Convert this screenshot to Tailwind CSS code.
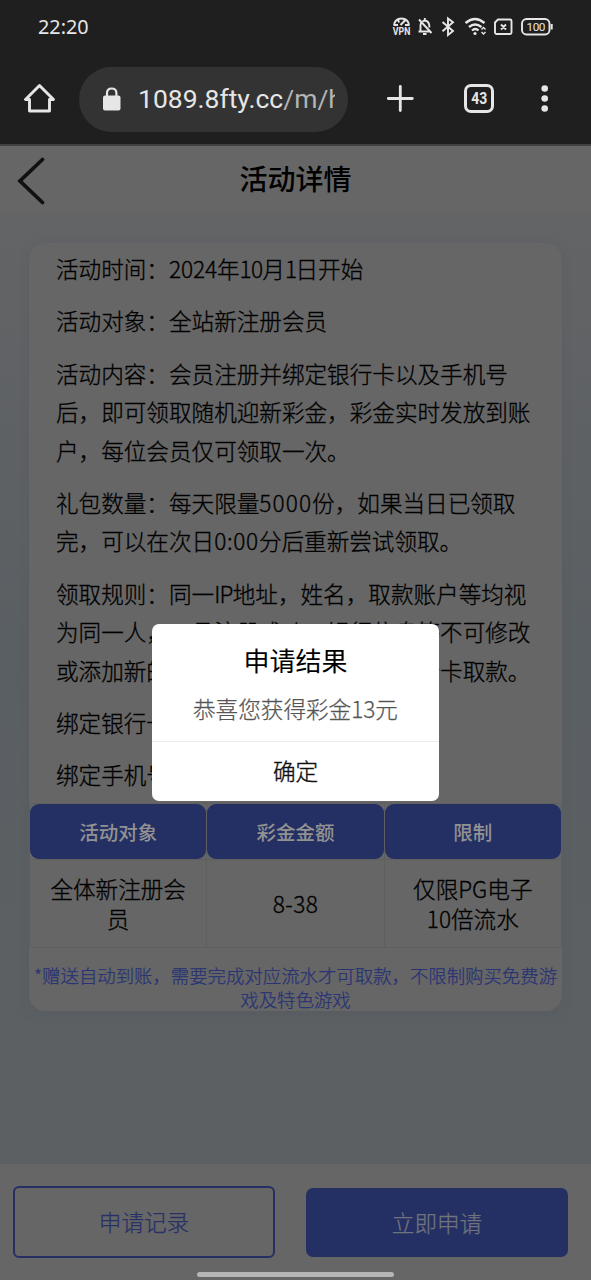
<!DOCTYPE html>
<html lang="zh-CN">
<head>
<meta charset="utf-8">
<title>活动详情</title>
<script src="https://cdn.jsdelivr.net/npm/@tailwindcss/browser@4"></script>
</head>
<body class="relative flex h-[1280px] w-[591px] flex-col overflow-hidden bg-[#666] font-['Noto_Sans_CJK_SC',sans-serif] text-black">
<header class="h-[146px] shrink-0 border-b-2 border-[#414141] bg-[#1f1f1f] text-[#e6e6e6]">
  <div class="flex h-[54px] items-center pr-[37px] pl-[38px] font-['Noto_Sans',sans-serif]">
    <span class="grow text-[19.8px]">22:20</span>
    <svg class="h-[22px] w-[162px]" viewBox="392 16 162 22" fill="none" stroke="#e6e6e6" stroke-width="1.9">
      <path d="M394 25.500c0-4 3-7 7.500-7s7.500 3 7.500 7M394 25h4M405 25h4M398 19.500l1 3M404 19.500l1.500 2M400.500 25l4-4" stroke-width="2"/>
      <text x="392.800" y="35.300" font-size="10.500" font-weight="700" fill="#e6e6e6" stroke="none" textLength="17.500" lengthAdjust="spacingAndGlyphs" font-family="Roboto">VPN</text>
      <path d="M418.500 31.500h11M420.500 31v-5.500q0-1.500.7-2.700M422.500 21.500q1-.8 2.500-1 4 1 4.300 5v2M424.800 18v2.500M419 19.500l12.500 13.500M423 34h3.500"/>
      <path d="M442.500 22l10.500 9-5 4V18.500l5 3.800-10.500 9" stroke-width="1.900"/>
      <path d="M465.500 23q9.500-8 19 0M469 27q6-5 12.500 0M472 30.500q3.500-3 6.500 0" stroke-width="2.300"/>
      <circle cx="475" cy="33.500" r="1.600" fill="#e6e6e6" stroke="none"/>
      <path d="M481.500 29.500l2-2 2 2M481.500 32l2 2 2-2" stroke-width="1.400"/>
      <path d="M498 19.500h12q1.500 0 1.500 1.500v11.500q0 1.500-1.500 1.500h-13.500q-1.500 0-1.500-1.500v-10zM501 24.500l5 5M506 24.500l-5 5"/>
      <rect x="522" y="19" width="27.500" height="15.500" rx="4.500"/>
      <path d="M551.700 24v5.500" stroke-width="2"/>
      <text x="526.500" y="31" font-size="11.800" fill="#e6e6e6" stroke="none" textLength="19" font-family="Roboto">100</text>
    </svg>
  </div>
  <div class="flex h-[90px] items-center">
    <svg class="ml-[24px] h-8 w-8" viewBox="24 83 32 32" fill="none" stroke="#e6e6e6" stroke-width="2.900" stroke-linejoin="round"><path d="M25.500 99.500h4v11.500h20V99.500h4L39.500 85.500z"/></svg>
    <div class="ml-[23px] flex h-[65px] w-[269px] items-center rounded-full bg-[#333] pl-[23px]">
      <svg class="h-6 w-[19px] shrink-0" viewBox="0 0 19 24"><rect x="1" y="8.500" width="17.500" height="15" rx="2" fill="#e6e6e6"/><path d="M5 9V6q0-4.500 4.700-4.500T14.400 6v3" fill="none" stroke="#e6e6e6" stroke-width="2.200"/></svg>
      <div class="ml-[17px] w-[197px] overflow-hidden font-['Roboto',sans-serif] text-[26.5px] whitespace-nowrap">1089.8fty.cc<span class="text-[#b4b4b4]">/m/h</span></div>
    </div>
    <svg class="ml-[38px] h-8 w-[170px]" viewBox="386 83 170 32" fill="none" stroke="#e6e6e6" stroke-width="2.800"><path d="M388.300 98.500h24M400.300 86.500v24" stroke-linecap="round"/><rect x="465.500" y="85.500" width="27" height="26" rx="5.500" stroke-width="3"/><text x="471.300" y="104.300" font-size="16.500" font-weight="700" textLength="16" lengthAdjust="spacingAndGlyphs" fill="#e6e6e6" stroke="none" font-family="Roboto">43</text><g fill="#e6e6e6" stroke="none"><circle cx="544.700" cy="88.500" r="3.300"/><circle cx="544.700" cy="98.500" r="3.300"/><circle cx="544.700" cy="108.500" r="3.300"/></g></svg>
  </div>
</header>
<nav class="flex h-[66px] shrink-0 items-center">
  <svg class="mt-[3px] ml-4 h-[50px] w-[30px]" viewBox="16 157 30 50" fill="none" stroke="#111" stroke-width="3.800" stroke-linecap="round"><path d="M42.500 160.500L20 182l22.500 21.500"/></svg>
  <h1 class="mr-[46px] mb-[2px] grow text-center text-[28px] font-medium">活动详情</h1>
</nav>
<main class="h-[952px] shrink-0 bg-linear-to-b from-[#636466] via-[#5a5f63] via-45% to-[#5c6063] px-[29px] pt-[31px]">
  <article class="h-[768px] w-[533px] rounded-2xl bg-[#666] shadow-[0_3px_8px_#555a5f80]">
    <div class="flex h-[560px] flex-col gap-[14px] pt-[7px] pl-[27px] text-[22.6px] leading-[38.4px] font-light whitespace-nowrap [-webkit-text-stroke:0.3px]">
      <p>活动时间：<span class="tracking-[-.1px]">2024</span>年<span class="tracking-[-.7px]">10</span>月<span class="tracking-[-1.5px]">1</span>日开始</p>
      <p>活动对象：全站新注册会员</p>
      <p>活动内容：会员注册并绑定银行卡以及手机号<br>后，即可领取随机迎新彩金，彩金实时发放到账<br>户，每位会员仅可领取一次。</p>
      <p>礼包数量：每天限量<span class="tracking-[1.1px]">5000</span>份，如果当日已领取<br>完，可以在次日<span class="tracking-[.7px]">0:00</span>分后重新尝试领取。</p>
      <p>领取规则：同一<span class="tracking-[-.7px]">IP</span>地址，姓名，取款账户等均视<br>为同一人，一旦注册成功，银行信息等不可修改<br>或添加新的银行卡，只能用绑定的银行卡取款。</p>
      <p>绑定银行卡</p>
      <p>绑定手机号</p>
    </div>
    <table class="w-[533px] table-fixed border-collapse text-center">
      <thead><tr class="h-[56px] text-[19.5px] text-[#929292]">
        <th class="border border-[#5f5f5f] p-0"><div class="flex h-[55px] items-center justify-center rounded-[9px] bg-[#243063] font-medium">活动对象</div></th>
        <th class="border border-[#5f5f5f] p-0"><div class="flex h-[55px] items-center justify-center rounded-[9px] bg-[#243063] font-medium">彩金金额</div></th>
        <th class="border border-[#5f5f5f] p-0"><div class="flex h-[55px] items-center justify-center rounded-[9px] bg-[#243063] font-medium">限制</div></th>
      </tr></thead>
      <tbody><tr class="h-[88px] text-[22.6px] leading-[29.5px] font-light [-webkit-text-stroke:0.3px]">
        <td class="border border-[#5f5f5f] p-0">全体新注册会<br>员</td><td class="border border-[#5f5f5f] p-0 tracking-[.4px]">8-38</td><td class="border border-[#5f5f5f] p-0">仅限PG电子<br>10倍流水</td>
      </tr></tbody>
    </table>
    <p class="pt-[15px] text-center text-[18.4px] leading-[24px] font-light whitespace-nowrap text-[#273374] [-webkit-text-stroke:0.25px]">*赠送自动到账，需要完成对应流水才可取款，不限制购买免费游<br>戏及特色游戏</p>
  </article>
</main>
<footer class="flex h-[116px] shrink-0 gap-[31px] pt-[22px] pl-[13px] text-[22.6px] font-light [-webkit-text-stroke:0.25px]">
  <button class="h-[72px] w-[262px] rounded-md border-2 border-[#252f66] text-[#273166]">申请记录</button>
  <button class="mt-[2px] h-[69px] w-[262px] rounded-[7px] bg-[#243063] text-[#71747d]">立即申请</button>
</footer>
<section class="absolute top-[624px] left-[152px] h-[177px] w-[287px] rounded-[7px] bg-white text-center">
  <h2 class="pt-[17px] text-[26px] leading-[37px]">申请结果</h2>
  <p class="h-[63px] pt-[12px] text-[22.6px] leading-[38px] font-light text-[#555] [-webkit-text-stroke:0.25px]">恭喜您获得彩金13元</p>
  <button class="h-[59px] w-full border-t border-[#ebebeb] text-[22.6px] font-light text-[#111] [-webkit-text-stroke:0.4px]">确定</button>
</section>
<div class="absolute bottom-[3px] left-[197px] h-[5px] w-[197px] rounded-full bg-[#b5b5b5]"></div>
</body>
</html>
